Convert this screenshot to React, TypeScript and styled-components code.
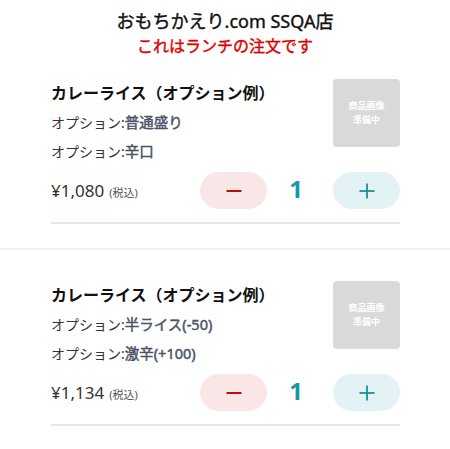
import React from "react";
import styled, { createGlobalStyle } from "styled-components";

const GlobalStyle = createGlobalStyle`
  html, body {
    margin: 0;
    padding: 0;
    background: #ffffff;
  }
  body {
    font-family: "Noto Sans", "Noto Sans CJK JP", sans-serif;
    color: #222;
  }
`;

const Page = styled.div`
  width: 450px;
  overflow: hidden;
`;

const Header = styled.header`
  padding-top: 8px;
  text-align: center;
`;

const ShopName = styled.div`
  font-size: 18px;
  line-height: 26px;
  font-weight: 400;
  color: #111;
  -webkit-text-stroke: 0.4px currentColor;
`;

const Notice = styled.div`
  font-family: "Noto Sans CJK JP", sans-serif;
  font-size: 16px;
  line-height: 22px;
  font-weight: 400;
  color: #e00000;
  -webkit-text-stroke: 0.4px currentColor;
`;

const Card = styled.section`
  padding: 31px 50px 24px 51px;
  border-bottom: 2px solid #f3f3f3;
  &:first-of-type {
    padding-top: 23px;
  }
`;

const TopRow = styled.div`
  display: flex;
  align-items: flex-start;
  gap: 12px;
`;

const Info = styled.div`
  flex: 1;
  min-width: 0;
`;

const Name = styled.h2`
  margin: 0 0 3px;
  font-family: "Noto Sans CJK JP", sans-serif;
  font-size: 16px;
  line-height: 26px;
  font-weight: 700;
  color: #111;
`;

const OptionRow = styled.div`
  font-size: 14px;
  line-height: 29px;
  color: #333;
`;

const OptionValue = styled.span`
  color: #4a5266;
  font-weight: 400;
  font-size: 14.5px;
  -webkit-text-stroke: 0.45px currentColor;
`;

const Thumb = styled.div`
  width: 67px;
  height: 68px;
  flex: none;
  border-radius: 4px;
  background: #d9d9d9;
  color: #ffffff;
  font-family: "Noto Sans CJK JP", sans-serif;
  font-size: 9px;
  line-height: 14px;
  font-weight: 700;
  display: flex;
  flex-direction: column;
  align-items: center;
  justify-content: center;
  text-align: center;
`;

const PriceRow = styled.div`
  margin-top: 6px;
  display: flex;
  align-items: center;
  height: 37px;
`;

const Price = styled.div`
  flex: 1;
  font-size: 17px;
  font-weight: 400;
  color: #333;
`;

const TaxNote = styled.span`
  margin-left: 5px;
  font-size: 11px;
  color: #555;
`;

const Stepper = styled.div`
  display: flex;
  align-items: center;
`;

const StepButton = styled.button<{ $tone: "minus" | "plus" }>`
  width: 67px;
  height: 37px;
  border: none;
  padding: 0;
  border-radius: 19px;
  background: ${(p) => (p.$tone === "minus" ? "#f9e7e7" : "#e2f2f5")};
  color: ${(p) => (p.$tone === "minus" ? "#c20a0a" : "#16909a")};
  display: flex;
  align-items: center;
  justify-content: center;
  cursor: pointer;
`;

const Quantity = styled.div`
  width: 66px;
  text-align: center;
  font-size: 24px;
  line-height: 30px;
  font-weight: 700;
  color: #1898a2;
  padding-right: 8px;
  box-sizing: border-box;
  margin-top: -4px;
`;

const Divider = styled.div`
  margin-top: 13px;
  height: 2px;
  background: #e8e8e8;
`;

const MinusIcon = () => (
  <svg width="16" height="16" viewBox="0 0 16 16" aria-hidden="true">
    <line x1="0.5" y1="8" x2="15.5" y2="8" stroke="currentColor" strokeWidth="2" />
  </svg>
);

const PlusIcon = () => (
  <svg width="16" height="16" viewBox="0 0 16 16" aria-hidden="true">
    <line x1="0.5" y1="8" x2="15.5" y2="8" stroke="currentColor" strokeWidth="1.8" />
    <line x1="8" y1="0.5" x2="8" y2="15.5" stroke="currentColor" strokeWidth="1.8" />
  </svg>
);

type Item = {
  name: string;
  options: string[];
  price: string;
  qty: number;
};

const items: Item[] = [
  { name: "カレーライス（オプション例）", options: ["普通盛り", "辛口"], price: "¥1,080", qty: 1 },
  { name: "カレーライス（オプション例）", options: ["半ライス(-50)", "激辛(+100)"], price: "¥1,134", qty: 1 },
];

export default function App() {
  return (
    <Page>
      <GlobalStyle />
      <Header>
        <ShopName>おもちかえり.com SSQA店</ShopName>
        <Notice>これはランチの注文です</Notice>
      </Header>
      {items.map((item, i) => (
        <Card key={i}>
          <TopRow>
            <Info>
              <Name>{item.name}</Name>
              {item.options.map((o, j) => (
                <OptionRow key={j}>
                  オプション:<OptionValue>{o}</OptionValue>
                </OptionRow>
              ))}
            </Info>
            <Thumb>
              <span>商品画像</span>
              <span>準備中</span>
            </Thumb>
          </TopRow>
          <PriceRow>
            <Price>
              {item.price}
              <TaxNote>(税込)</TaxNote>
            </Price>
            <Stepper>
              <StepButton $tone="minus" aria-label="減らす">
                <MinusIcon />
              </StepButton>
              <Quantity>{item.qty}</Quantity>
              <StepButton $tone="plus" aria-label="増やす">
                <PlusIcon />
              </StepButton>
            </Stepper>
          </PriceRow>
          <Divider />
        </Card>
      ))}
    </Page>
  );
}
